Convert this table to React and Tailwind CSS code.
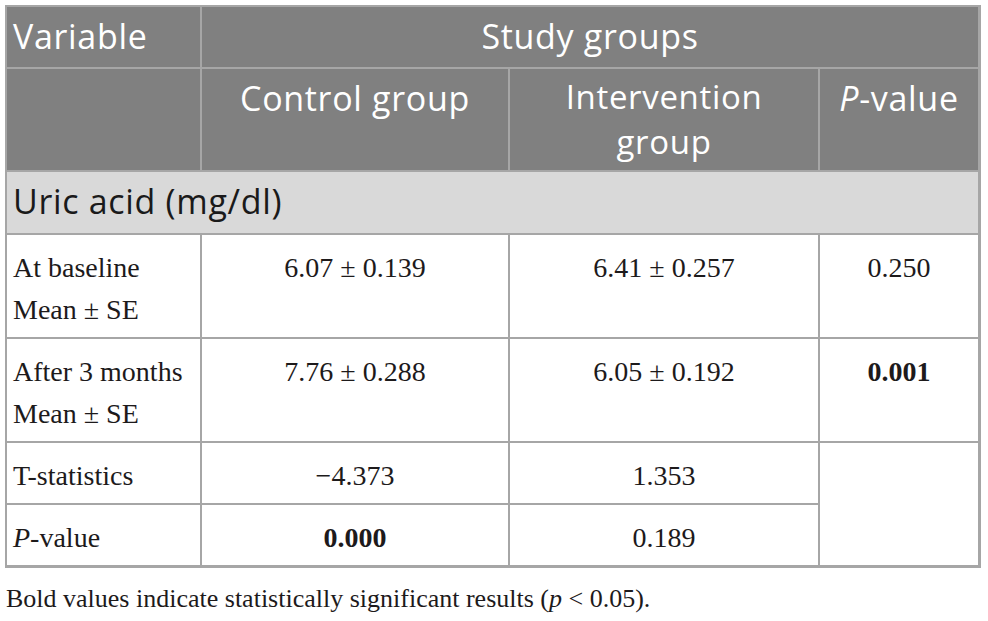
const sans = "font-['Open_Sans',sans-serif]";
const serif = "font-['Liberation_Serif',serif]";

function Head({ children, className = '' }) {
    return (
        <div className={`bg-[#808080] text-white text-[34px] leading-[40px] tracking-[0.02em] pt-[9px] px-[6px] ${sans} ${className}`}>
            {children}
        </div>
    );
}

function Cell({ children, className = '' }) {
    return (
        <div className={`bg-white text-[#1d1a1b] text-[28px] leading-[42px] pt-[12px] px-[6px] ${serif} ${className}`}>
            {children}
        </div>
    );
}

export default function App() {
    return (
        <div className="bg-white w-[988px] h-[621px] pt-[5px] pl-[5px]">
            {/* Table */}
            <div className="grid w-max grid-cols-[193px_306px_308px_158px] grid-rows-[60px_101px_61px_102px_102px_60px_60px] gap-[2px] bg-[#a6a6a6] pt-[2px] pl-[2px] pr-[3px] pb-[3px]">
                <Head>Variable</Head>
                <Head className="col-span-3 text-center">Study groups</Head>

                <Head />
                <Head className="text-center">Control group</Head>
                <div className={`bg-[#808080] text-white text-[33px] leading-[45px] tracking-[0.02em] pt-[5px] px-[6px] text-center ${sans}`}>
                    Intervention<br />group
                </div>
                <Head className="text-center"><span className="italic">P</span>-value</Head>

                <div className={`col-span-4 bg-[#d9d9d9] text-[#1a1a1a] text-[34px] leading-[40px] tracking-[0.02em] pt-[9px] px-[6px] ${sans}`}>
                    Uric acid (mg/dl)
                </div>

                <Cell>At baseline<br />Mean ± SE</Cell>
                <Cell className="text-center">6.07 ± 0.139</Cell>
                <Cell className="text-center">6.41 ± 0.257</Cell>
                <Cell className="text-center">0.250</Cell>

                <Cell>After 3 months<br />Mean ± SE</Cell>
                <Cell className="text-center">7.76 ± 0.288</Cell>
                <Cell className="text-center">6.05 ± 0.192</Cell>
                <Cell className="text-center font-bold">0.001</Cell>

                <Cell>T-statistics</Cell>
                <Cell className="text-center">−4.373</Cell>
                <Cell className="text-center">1.353</Cell>
                <Cell className="row-span-2" />

                <Cell><span className="italic">P</span>-value</Cell>
                <Cell className="text-center font-bold">0.000</Cell>
                <Cell className="text-center">0.189</Cell>
            </div>

            {/* Footnote */}
            <p className={`mt-[16px] pl-[1px] text-[26px] leading-[30px] text-[#1d1a1b] ${serif}`}>
                Bold values indicate statistically significant results (<span className="italic">p</span> &lt; 0.05).
            </p>
        </div>
    );
}
